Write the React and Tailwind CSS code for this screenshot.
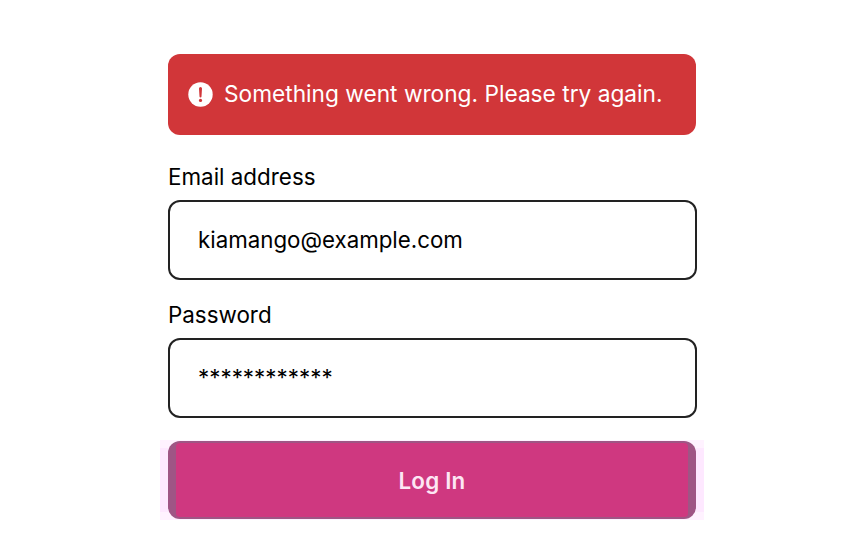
export default function App() {
  return (
    <div className="w-[864px] h-[540px] bg-white flex flex-col items-center pt-[54px] font-['Inter',sans-serif] overflow-hidden">
      <div className="w-[528px] flex flex-col">
        <div className="h-[81px] bg-[#d13639] rounded-xl flex items-center pl-5 gap-[11px] text-white text-[22.7px] leading-none">
          <svg width="25" height="25" viewBox="0 0 25 25" className="shrink-0" aria-hidden="true">
            <circle cx="12.5" cy="12.5" r="12.2" fill="#fff" />
            <path d="M11 6.6a1.5 1.5 0 0 1 3 0l-.5 8a1 1 0 0 1-2 0z" fill="#d13639" />
            <circle cx="12.5" cy="18.4" r="1.6" fill="#d13639" />
          </svg>
          <span>Something went wrong. Please try again.</span>
        </div>
        <label className="mt-[28px] text-[22.4px] leading-[28px] text-black">Email address</label>
        <div className="mt-[9px] h-[80px] w-[529px] border-2 border-[#222222] rounded-xl flex items-center pl-[28px] text-[22.3px] text-black">
          kiamango@example.com
        </div>
        <label className="mt-[21px] text-[22.4px] leading-[28px] text-black">Password</label>
        <div className="mt-[9px] h-[80px] w-[529px] border-2 border-[#222222] rounded-xl flex items-center pl-[28px] pb-[1px] text-[22.4px] text-black">
          <span>************</span>
        </div>
      </div>
      <div className="mt-[22px] w-[544px] h-[80px] bg-[#fff2ff] flex items-center">
        <div className="w-2 h-[64px] bg-[#fee8ff] shrink-0"></div>
        <div className="flex-1 h-[78px] rounded-xl bg-[#9f5585] px-2 py-[2px]">
          <div className="h-full rounded-sm bg-[#cf3880] flex items-center justify-center pt-[2px] text-[#fde6f4] text-[22.4px] tracking-[0.2px] font-semibold">
            Log In
          </div>
        </div>
        <div className="w-2 h-[64px] bg-[#fee8ff] shrink-0"></div>
      </div>
    </div>
  );
}
